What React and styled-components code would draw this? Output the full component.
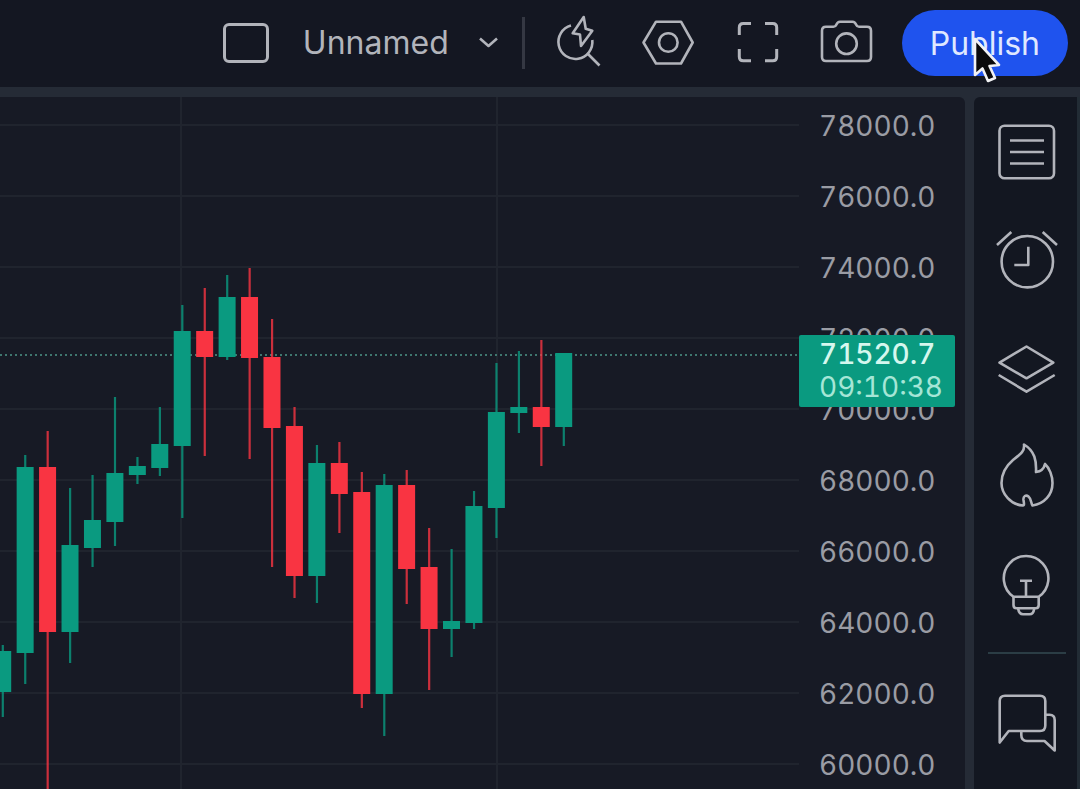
import React from 'react';
import styled, { createGlobalStyle } from 'styled-components';

const GlobalStyle = createGlobalStyle`
  * {
    box-sizing: border-box;
  }

  body {
    margin: 0;
    background: #252b36;
    font-family: Inter, "Liberation Sans", sans-serif;
  }
`;

const colors = {
  up: '#0a9a80',
  down: '#f93442',
  grid: '#20242e',
  icon: '#b2b4bb',
  axisText: '#9a9ca4',
};

const Page = styled.div`
  min-height: 100vh;
  display: flex;
  flex-direction: column;
  gap: 10px;
  overflow: hidden;
  background: #252b36;
`;

const Toolbar = styled.header`
  height: 87px;
  padding: 0 12px 1px 0;
  display: flex;
  align-items: center;
  justify-content: flex-end;
  background: #141722;
`;

const BareButton = styled.button`
  padding: 0;
  border: 0;
  background: none;
  color: ${colors.icon};
  font: inherit;
  cursor: pointer;
`;

const LayoutButton = styled(BareButton)`
  width: 46px;
  height: 40px;
  margin-right: 34px;
  border: 3px solid ${colors.icon};
  border-radius: 6px;
`;

const NameButton = styled(BareButton)`
  display: flex;
  align-items: center;
  gap: 30px;
  font-size: 32px;
  line-height: 36px;
`;

const ToolbarDivider = styled.div`
  width: 3px;
  height: 52px;
  margin: 0 26px 0 24px;
  background: #353843;
`;

const Tools = styled.div`
  display: flex;
  gap: 33px;
  margin-right: 28px;
`;

const IconButton = styled(BareButton)`
  width: ${props => props.$size}px;
  height: ${props => props.$size}px;
`;

const Icon = styled.svg`
  display: block;
  overflow: visible;
  fill: none;
  stroke: ${colors.icon};
  stroke-width: 2.6;
  stroke-linejoin: round;
`;

const PublishButton = styled(BareButton)`
  position: relative;
  height: 66px;
  padding: 0 28px;
  border-radius: 33px;
  background: #1f53ee;
  color: #dfe8ff;
  font-size: 32px;
`;

const Pointer = styled.svg`
  position: absolute;
  left: 70px;
  top: 26px;
  fill: #0a0a0c;
  stroke: #f2f2f4;
  stroke-width: 2.6;
  stroke-linejoin: round;
`;

const Body = styled.div`
  flex: 1;
  display: flex;
  gap: 9px;
`;

const ChartPanel = styled.main`
  flex: 1;
  min-width: 0;
  display: flex;
  border-top-right-radius: 6px;
  background: #171a25;
`;

const Plot = styled.div`
  flex: 1;
  min-width: 0;
`;

const PlotSvg = styled.svg`
  display: block;
  width: 100%;
  height: 692px;
`;

const PriceAxis = styled.div`
  position: relative;
  width: 166px;
  padding: 14px 0 0 20px;
  display: flex;
  flex-direction: column;
  gap: 41px;
  color: ${colors.axisText};
  font-size: 28px;
  font-variant-numeric: tabular-nums;
  line-height: 30px;
`;

const PriceTag = styled.div`
  position: absolute;
  top: 238px;
  left: 0;
  right: 10px;
  padding: 3px 0 3px 20px;
  border-radius: 2px;
  background: ${colors.up};
  color: #a5e6d6;
  line-height: 33px;
`;

const LastPrice = styled.div`
  color: #d5f7ee;
  font-weight: 500;
`;

const Sidebar = styled.aside`
  width: 106px;
  padding: 25px 0 0 2px;
  display: flex;
  flex-direction: column;
  align-items: center;
  gap: 48px;
  border-right: 3px solid #222c35;
  border-top-left-radius: 6px;
  background: #131721;
`;

const SidebarDivider = styled.hr`
  width: 78px;
  height: 2px;
  margin: -10px 0;
  border: 0;
  background: #2b3d45;
`;

const PRICES = [78000, 76000, 74000, 72000, 70000, 68000, 66000, 64000, 62000, 60000];
const ROW = 71;
const FIRST_ROW = 28;
const CANDLE_STEP = 22.44;

// high, body top, body bottom, low, rising
const CANDLES = [
  [548, 554, 595, 620, true],
  [358, 370, 556, 587, true],
  [334, 370, 535, 700, false],
  [391, 448, 535, 566, true],
  [378, 423, 451, 470, true],
  [300, 376, 425, 449, true],
  [360, 369, 378, 387, true],
  [310, 347, 371, 379, true],
  [208, 234, 349, 421, true],
  [191, 234, 260, 359, false],
  [178, 200, 260, 263, true],
  [171, 200, 261, 362, false],
  [222, 260, 331, 470, false],
  [310, 329, 479, 501, false],
  [348, 366, 479, 506, true],
  [345, 366, 397, 436, false],
  [375, 395, 597, 611, false],
  [377, 388, 597, 639, true],
  [373, 388, 472, 507, false],
  [431, 470, 532, 593, false],
  [452, 524, 532, 560, true],
  [394, 409, 526, 532, true],
  [266, 315, 411, 441, true],
  [254, 310, 316, 336, true],
  [243, 310, 330, 369, false],
  [256, 256, 330, 349, true],
];

const Candle = ({ x, candle }) => {
  const [high, top, bottom, low, rising] = candle;
  const fill = rising ? colors.up : colors.down;

  return (
    <g fill={fill}>
      <rect x={x - 1} y={high} width="2.2" height={low - high} opacity="0.8" />
      <rect x={x - 8.5} y={top} width="17" height={bottom - top} />
    </g>
  );
};

const Chart = () => (
  <PlotSvg role="img" aria-label="Candlestick chart">
    <g stroke={colors.grid} strokeWidth="2">
      {PRICES.map((price, i) => (
        <line key={price} x1="0" x2="100%" y1={FIRST_ROW + i * ROW} y2={FIRST_ROW + i * ROW} />
      ))}
      <line x1="181" x2="181" y1="0" y2="100%" />
      <line x1="497" x2="497" y1="0" y2="100%" />
    </g>
    <line x1="0" x2="100%" y1="258" y2="258" stroke="#3f776f" strokeWidth="2" strokeDasharray="2 3" />
    {CANDLES.map((candle, i) => (
      <Candle key={i} x={2.7 + i * CANDLE_STEP} candle={candle} />
    ))}
  </PlotSvg>
);

const TOOLS = [
  {
    label: 'Quick search',
    shape: (
      <>
        <path d="M20 10.5A17 17 0 1 0 41.3 25" />
        <path d="M36.5 38.5L48.5 50.5" />
        <path d="M32.7 2L21.7 18.3L29 19.5L30 31L41.3 15.7L34.7 13.7Z" />
      </>
    ),
  },
  {
    label: 'Settings',
    shape: (
      <>
        <path d="M3.5 27.5L16 6.7H41L52.7 27.5L41 48.5H16Z" />
        <circle cx="28.3" cy="27.5" r="9.3" />
      </>
    ),
  },
  {
    label: 'Fullscreen',
    shape: (
      <path
        strokeWidth="3"
        d="M10.3 20V12.5Q10.3 8.5 14.3 8.5H22M36 8.5H43.7Q47.7 8.5 47.7 12.5V20M47.7 34V41.7Q47.7 45.7 43.7 45.7H36M22 45.7H14.3Q10.3 45.7 10.3 41.7V34"
      />
    ),
  },
  {
    label: 'Take a snapshot',
    shape: (
      <>
        <path d="M8 11.7H15.5Q17.5 11.7 18.3 9.7Q19.5 6.7 22 6.7H34.5Q37 6.7 38.2 9.7Q39 11.7 41 11.7H49Q53 11.7 53 15.7V42Q53 46 49 46H8Q4 46 4 42V15.7Q4 11.7 8 11.7Z" />
        <circle cx="28.5" cy="28.7" r="10.3" />
      </>
    ),
  },
];

const PANELS = [
  {
    label: 'Watchlist',
    shape: (
      <>
        <rect x="2.5" y="3.7" width="54.5" height="52.6" rx="5" />
        <path d="M13 18.5H47M13 30H47M13 41.5H47" />
      </>
    ),
  },
  {
    label: 'Alerts',
    shape: (
      <>
        <circle cx="30.3" cy="31.7" r="25.7" />
        <path d="M31.3 16.7V35H17.3M0 15L14.3 2M45.7 2L60 15" />
      </>
    ),
  },
  {
    label: 'Object tree',
    shape: (
      <path d="M29.5 8.5L56.3 24.7L29.5 40.3L2.5 24.7ZM1.7 37L29.5 53.7L57.7 37" />
    ),
  },
  {
    label: 'Hotlists',
    shape: (
      <path d="M27 -1.5C28 6 22 9 16 14C9 20 4.5 27 4.5 37C4.5 48 14 59 26 59.5C27.5 59.5 27 57 26.5 54C26 50 29 48.5 31.5 50.5C34.5 53 34 58 35.5 59.5C47 58 55.5 49 55.5 37C55.5 30 52.5 22 48 18C47 22.5 44 25.5 39 26C39.5 15 38 5 27 -1.5Z" />
    ),
  },
  {
    label: 'Ideas',
    shape: (
      <>
        <path d="M16.5 42.7A22.3 22.3 0 1 1 41.7 42.7Z" />
        <path d="M16.5 42.7V51Q16.5 54.3 19.5 54.3H38.7Q41.7 54.3 41.7 51V42.7M21 54.3Q22 60.3 26 60.3H32.5Q36.5 60.3 37.3 54.3" />
        <path d="M23 26.7H35M29 26.7V42.7" />
      </>
    ),
  },
];

const ToolIcon = ({ size, tool }) => (
  <IconButton type="button" $size={size} aria-label={tool.label}>
    <Icon width={size} height={size} viewBox={`0 0 ${size} ${size}`} aria-hidden="true">
      {tool.shape}
    </Icon>
  </IconButton>
);

const CHAT = {
  label: 'Chats',
  shape: (
    <>
      <path d="M2.7 50.5V9Q2.7 3.7 8 3.7H43Q48.3 3.7 48.3 9V33.5Q48.3 39 43 39H11.7Z" />
      <path d="M48.3 22.7H52.5Q57.7 22.7 57.7 28V58.5L47.5 49H30Q24.3 49 24.3 43V39" />
    </>
  ),
};

export default function App() {
  return (
    <Page>
      <GlobalStyle />
      <Toolbar>
        <LayoutButton type="button" aria-label="Select layout" />
        <NameButton type="button">
          Unnamed
          <Icon width="19" height="12" viewBox="0 0 19 12" aria-hidden="true">
            <path d="M1 1.5L9.5 9L18 1.5" />
          </Icon>
        </NameButton>
        <ToolbarDivider />
        <Tools>
          {TOOLS.map(tool => (
            <ToolIcon key={tool.label} size={56} tool={tool} />
          ))}
        </Tools>
        <PublishButton type="button">
          Publish
          <Pointer width="30" height="48" viewBox="-2 -2 30 48" aria-hidden="true">
            <path d="M1 1V37L8.5 30.5L14 43L21 40L15.5 28L25 27Z" />
          </Pointer>
        </PublishButton>
      </Toolbar>
      <Body>
        <ChartPanel>
          <Plot>
            <Chart />
          </Plot>
          <PriceAxis>
            {PRICES.map(price => (
              <div key={price}>{price.toFixed(1)}</div>
            ))}
            <PriceTag>
              <LastPrice>71520.7</LastPrice>
              <div>09:10:38</div>
            </PriceTag>
          </PriceAxis>
        </ChartPanel>
        <Sidebar>
          {PANELS.map(panel => (
            <ToolIcon key={panel.label} size={60} tool={panel} />
          ))}
          <SidebarDivider />
          <ToolIcon size={60} tool={CHAT} />
        </Sidebar>
      </Body>
    </Page>
  );
}
